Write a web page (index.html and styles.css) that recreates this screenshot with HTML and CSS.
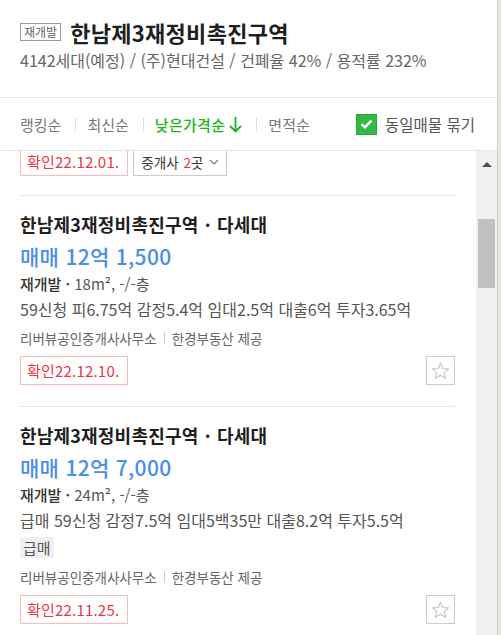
FILE: index.html
```html
<!DOCTYPE html>
<html lang="ko">

<head>
    <meta charset="UTF-8">
    <meta name="viewport" content="width=device-width, initial-scale=1.0">
    <title>매물 목록</title>
    <link rel="stylesheet" href="styles.css">
</head>

<body>
    <div class="app">
        <div class="panel">
            <div class="head">
                <div class="title_row">
                    <span class="tag">재개발</span>
                    <h1 class="title">한남제3재정비촉진구역</h1>
                </div>
                <p class="sub">4142세대(예정) / (주)현대건설 / 건폐율 42% / 용적률 232%</p>
            </div>

            <div class="sortbar">
                <ul class="sorts">
                    <li>랭킹순</li>
                    <li class="sep"></li>
                    <li>최신순</li>
                    <li class="sep"></li>
                    <li class="on">낮은가격순
                        <svg class="down" width="13" height="17" viewBox="0 0 13 17"><path d="M6.5 1 V15.5 M1 10 L6.5 15.5 L12 10" fill="none" stroke="#1db51d" stroke-width="1.8"/></svg>
                    </li>
                    <li class="sep"></li>
                    <li>면적순</li>
                </ul>
                <label class="group">
                    <span class="check">
                        <svg width="13" height="10" viewBox="0 0 13 10"><path d="M1.5 5.2 L4.8 8.3 L11.5 1.6" fill="none" stroke="#fff" stroke-width="2.4"/></svg>
                    </span>
                    동일매물 묶기
                </label>
            </div>

            <div class="listwrap">
                <div class="list">
                    <div class="tail">
                        <span class="confirm">확인22.12.01.</span>
                        <span class="broker">중개사 <em>2</em>곳
                            <svg width="10" height="6" viewBox="0 0 10 6"><path d="M1 1 L5 5 L9 1" fill="none" stroke="#777" stroke-width="1.1"/></svg>
                        </span>
                    </div>

                    <div class="item">
                        <div class="item_title">한남제3재정비촉진구역 <span class="dot">·</span> 다세대</div>
                        <div class="price">매매 12억 1,500</div>
                        <div class="spec"><b>재개발 ·</b> 18m², -/-층</div>
                        <div class="desc">59신청 피6.75억 감정5.4억 임대2.5억 대출6억 투자3.65억</div>
                        <div class="agent">리버뷰공인중개사사무소<span class="bar"></span>한경부동산 제공</div>
                        <div class="bottom">
                            <span class="confirm">확인22.12.10.</span>
                            <span class="star">
                                <svg width="19" height="18" viewBox="0 0 19 18"><path d="M9.5 1.2 L11.8 6.5 L17.6 6.9 L13.2 10.7 L14.6 16.4 L9.5 13.3 L4.4 16.4 L5.8 10.7 L1.4 6.9 L7.2 6.5 Z" fill="none" stroke="#c4c4c4" stroke-width="1.1" stroke-linejoin="round"/></svg>
                            </span>
                        </div>
                    </div>

                    <div class="item">
                        <div class="item_title">한남제3재정비촉진구역 <span class="dot">·</span> 다세대</div>
                        <div class="price">매매 12억 7,000</div>
                        <div class="spec"><b>재개발 ·</b> 24m², -/-층</div>
                        <div class="desc">급매 59신청 감정7.5억 임대5백35만 대출8.2억 투자5.5억</div>
                        <div class="badges"><span class="badge">급매</span></div>
                        <div class="agent">리버뷰공인중개사사무소<span class="bar"></span>한경부동산 제공</div>
                        <div class="bottom">
                            <span class="confirm">확인22.11.25.</span>
                            <span class="star">
                                <svg width="19" height="18" viewBox="0 0 19 18"><path d="M9.5 1.2 L11.8 6.5 L17.6 6.9 L13.2 10.7 L14.6 16.4 L9.5 13.3 L4.4 16.4 L5.8 10.7 L1.4 6.9 L7.2 6.5 Z" fill="none" stroke="#c4c4c4" stroke-width="1.1" stroke-linejoin="round"/></svg>
                            </span>
                        </div>
                    </div>
                </div>

                <div class="scrollbar">
                    <div class="arrow"></div>
                    <div class="thumb"></div>
                </div>
            </div>
        </div>
        <div class="map"></div>
    </div>
</body>

</html>
```

FILE: styles.css
```css
* {
    margin: 0;
    padding: 0;
    list-style: none;
    box-sizing: border-box;
}

body {
    font-family: "Noto Sans CJK KR", "Noto Sans", sans-serif;
    color: #222;
    background-color: #fff;
    overflow: hidden;
}

.app {
    display: flex;
    height: 635px;
}

.panel {
    display: flex;
    flex-direction: column;
    width: 497px;
    height: 635px;
}

.map {
    flex: 1;
    background-color: #e8e6e1;
    border-left: 1px solid #d0d0d0;
}

/* 헤더 */
.head {
    height: 98px;
    padding: 16px 20px 0;
    border-bottom: 1px solid #e6e6e6;
}

.title_row {
    display: flex;
    align-items: center;
    gap: 9px;
}

.tag {
    height: 18px;
    padding: 0 3px;
    border: 1px solid #999;
    font-size: 12px;
    line-height: 16px;
    color: #666;
}

.title {
    font-size: 22px;
    font-weight: bold;
    line-height: 32px;
    letter-spacing: 0.3px;
    color: #1e1e1e;
}

.sub {
    font-size: 16px;
    line-height: 24px;
    color: #666;
}

/* 정렬 */
.sortbar {
    display: flex;
    align-items: center;
    justify-content: space-between;
    height: 53px;
    padding: 0 22px 0 20px;
    border-bottom: 1px solid #e6e6e6;
}

.sorts {
    display: flex;
    align-items: center;
    font-size: 15px;
    color: #777;
}

.sorts li {
    display: flex;
    align-items: center;
}

.sorts .sep {
    width: 1px;
    height: 13px;
    margin: 0 11px 0 14px;
    background-color: #ddd;
}

.sorts .on {
    color: #1db51d;
    font-weight: 500;
    letter-spacing: 0.3px;
}

.down {
    margin-left: 4px;
}

.group {
    display: flex;
    align-items: center;
    gap: 8px;
    font-size: 15.5px;
    color: #555;
}

.check {
    display: flex;
    align-items: center;
    justify-content: center;
    width: 21px;
    height: 21px;
    background-color: #33b944;
    border: 1px solid #2aa53a;
}

/* 목록 */
.listwrap {
    flex: 1;
    display: flex;
    overflow: hidden;
}

.list {
    flex: 1;
    padding: 0 21px 0 20px;
    overflow: hidden;
}

.tail {
    display: flex;
    gap: 5px;
    margin-top: -4px;
    padding-bottom: 19px;
    border-bottom: 1px solid #e6e6e6;
}

.confirm {
    height: 29px;
    padding: 0 8px 0 6px;
    border: 1px solid #f7bcc2;
    font-size: 15px;
    line-height: 27px;
    letter-spacing: 0.2px;
    color: #f0333f;
}

.broker {
    display: flex;
    align-items: center;
    gap: 5px;
    height: 29px;
    padding: 0 7px;
    border: 1px solid #ccc;
    font-size: 13.5px;
    color: #333;
}

.broker em {
    font-style: normal;
    color: #f0333f;
    margin-right: -5px;
}

.item {
    padding: 15px 0 21px;
    border-bottom: 1px solid #e6e6e6;
}

.item_title {
    font-size: 18px;
    font-weight: bold;
    line-height: 27px;
    letter-spacing: 0.2px;
    color: #1e1e1e;
}

.dot {
    margin: 0 1px;
}

.price {
    margin-top: 3px;
    font-size: 21px;
    font-weight: 500;
    line-height: 30px;
    letter-spacing: 0.3px;
    color: #4a8ee8;
}

.spec {
    font-size: 15px;
    line-height: 26px;
    color: #555;
}

.spec b {
    font-weight: 500;
    color: #333;
}

.desc {
    font-size: 16px;
    line-height: 24px;
    color: #555;
}

.badges {
    margin: 3px 0 6px;
}

.badge {
    display: inline-block;
    height: 21px;
    padding: 0 3px;
    background-color: #f0f0f0;
    font-size: 15px;
    line-height: 21px;
    color: #555;
}

.agent {
    display: flex;
    align-items: center;
    margin-top: 5px;
    font-size: 13.5px;
    line-height: 24px;
    color: #666;
}

.bar {
    width: 1px;
    height: 12px;
    margin: 0 7px;
    background-color: #ccc;
}

.bottom {
    display: flex;
    align-items: center;
    justify-content: space-between;
    margin-top: 6px;
}

.star {
    display: flex;
    align-items: center;
    justify-content: center;
    width: 29px;
    height: 29px;
    border: 1px solid #ccc;
}

/* 스크롤바 */
.scrollbar {
    display: flex;
    flex-direction: column;
    align-items: center;
    width: 21px;
    background-color: #f1f1f1;
}

.arrow {
    width: 0;
    height: 0;
    margin-top: 11px;
    border-left: 5px solid transparent;
    border-right: 5px solid transparent;
    border-bottom: 5px solid #505050;
}

.thumb {
    width: 17px;
    height: 69px;
    margin-top: 52px;
    background-color: #c1c1c1;
}
```
